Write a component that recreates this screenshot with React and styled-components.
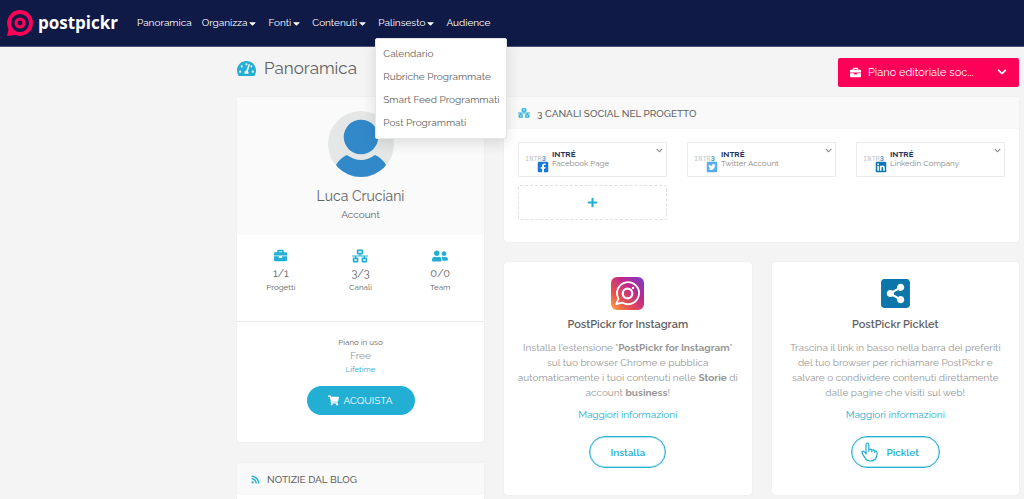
import React from "react";
import styled, { createGlobalStyle } from "styled-components";
import {
  FaTachometerAlt, FaBriefcase, FaNetworkWired, FaUserFriends, FaShoppingCart, FaRss,
  FaShareAltSquare, FaCaretDown, FaChevronDown, FaFacebookSquare, FaTwitterSquare, FaLinkedin, FaPlus,
} from "react-icons/fa";

const c = {
  navy: "#101a47", pink: "#ff0058", cyan: "#23aed4", text: "#636363", soft: "#979797",
  page: "#f4f4f4", head: "#f9f9f9", line: "#ebebeb",
};

const GlobalStyle = createGlobalStyle`
  * { box-sizing: border-box; }
  body { margin: 0; background: ${c.page}; color: ${c.text}; font: 10px/15px Raleway, Lato, sans-serif; }
  h1, h2, h3, p, ul { margin: 0; padding: 0; font-weight: 400; }
  ul { list-style: none; }
  a { color: inherit; text-decoration: none; }
  button, select { font: inherit; color: inherit; background: none; border: 0; padding: 0; cursor: pointer; }
  svg { display: block; flex: none; }
`;

const Header = styled.header`
  display: flex; align-items: center; height: 47px; padding-left: 6px;
  background: ${c.navy}; border-bottom: 1px solid #4c5479; color: #fff;
`;
const Brand = styled.a`
  display: flex; align-items: center; gap: 5px; width: 131px; color: #fff;
  font: 700 17px/24px "Open Sans", sans-serif;
`;
const Nav = styled.ul`display: flex; gap: 10px;`;
const NavItem = styled.li`position: relative;`;
const NavLink = styled.a`display: block; line-height: 16px;`;
const NavButton = styled.button`display: flex; align-items: center; line-height: 16px;`;
const Menu = styled.ul`
  position: absolute; z-index: 2; top: 23px; left: -3px; min-width: 129px; padding: 3px 7px 4px;
  background: #fff; color: ${c.text}; border: 1px solid #e6e6e6; border-radius: 2px;
  box-shadow: 0 4px 14px rgba(0, 0, 0, 0.12); white-space: nowrap; line-height: 23px;
`;

const Page = styled.main`padding: 0 5px 0 237px;`;
const TitleBar = styled.div`
  display: flex; justify-content: space-between; align-items: center; height: 50px;
`;
const Title = styled.h1`
  display: flex; align-items: center; gap: 8px; padding-bottom: 8px; font-size: 17px; line-height: 24px;
  svg { color: ${c.cyan}; }
`;
const Project = styled.label`
  display: flex; align-items: center; width: 181px; height: 29px; padding: 0 12px; gap: 7px;
  background: ${c.pink}; color: #fff; border-radius: 2px;
  select { flex: 1; appearance: none; outline: 0; font-size: 11px; }
  option { color: ${c.text}; }
`;
const Columns = styled.div`
  display: grid; grid-template-columns: 247fr 515fr; gap: 20px; align-items: start;
`;
const Stack = styled.div`display: grid; gap: ${(p) => p.$gap || 20}px;`;
const Card = styled.section`
  background: #fff; border-radius: 3px; box-shadow: 0 0 1px rgba(0, 0, 0, 0.16);
`;
const CardHead = styled.h2`
  display: flex; align-items: center; gap: 7px; height: 32px; padding: 0 14px; background: ${c.head};
  font-size: 10px; font-weight: 500;
  svg { color: ${c.cyan}; }
`;
const NewsList = styled.ul`min-height: 14px;`;

const Profile = styled.div`
  display: flex; flex-direction: column; align-items: center; padding: 14px 0 13px; background: #fafafa;
  svg { margin-bottom: 8px; }
  h2 { font-size: 14px; line-height: 22px; }
`;
const Stats = styled.ul`
  display: grid; grid-template-columns: repeat(3, 1fr); padding: 13px 4px 28px; text-align: center;
  border-bottom: 1px solid ${c.line};
`;
const Stat = styled.li`
  display: flex; flex-direction: column; align-items: center; font-size: 8px; line-height: 12px;
  svg { color: ${c.cyan}; }
  strong { font-size: 11px; font-weight: 400; line-height: 15px; }
`;
const StatIcon = styled.span`display: grid; place-items: center; height: 14px; margin-bottom: 4px;`;
const Plan = styled.div`
  display: flex; flex-direction: column; align-items: center; padding: 14px 0 27px;
  font-size: 8px; line-height: 13px;
  strong { font-size: 10px; font-weight: 400; color: ${c.soft}; }
  a { color: ${c.cyan}; line-height: 14px; }
`;
const BuyButton = styled.button`
  display: flex; align-items: center; justify-content: center; gap: 4px; width: 108px; height: 29px;
  margin-top: 10px; border-radius: 15px; background: ${c.cyan}; color: #fff; font-size: 10px;
`;

const Channels = styled.ul`
  display: grid; grid-template-columns: repeat(3, 1fr); gap: 8px 20px; padding: 13px 14px 22px;
`;
const Channel = styled.li`
  display: flex; align-items: flex-start; height: 35px; padding: 4px 3px 0 6px;
  border: 1px solid ${c.line}; border-radius: 1px; color: #858585; font-size: 8px; line-height: 9px;
  strong { display: block; margin-top: 3px; color: #26345c; }
  div { flex: 1; }
`;
const Avatar = styled.span`
  position: relative; width: 27px; height: 27px; padding-top: 8px; color: #c2c6c8;
  font: 7px/8px "Liberation Mono", monospace;
  b { color: #5199c5; }
  svg { position: absolute; right: 3px; bottom: 1px; background: #fff; border-radius: 2px; }
`;
const AddButton = styled.button`
  display: flex; align-items: center; justify-content: center; width: 100%; height: 35px;
  border: 1px dashed #e0e0e0; border-radius: 2px; color: ${c.cyan};
`;

const Promos = styled.div`display: grid; grid-template-columns: 1fr 1fr; gap: 20px;`;
const Promo = styled(Card)`
  display: flex; flex-direction: column; align-items: center; padding: 14px 10px 27px; text-align: center;
  h3 { margin-top: 6px; font-size: 11px; line-height: 18px; font-weight: 600; }
  p { margin-top: 6px; color: ${c.soft}; }
  > a { margin-top: 7px; color: ${c.cyan}; }
`;
const PromoIcon = styled.span`display: grid; place-items: center; height: 34px; color: #0c75aa;`;
const PillButton = styled.button`
  display: flex; align-items: center; justify-content: center; gap: 8px; height: 32px; margin-top: 14px;
  padding: 0 ${(p) => (p.$icon ? "20px 0 9px" : "20px")}; border: 1px solid ${c.cyan}; border-radius: 16px;
  box-shadow: inset 0 0 0 1px rgba(35, 174, 212, 0.35); color: ${c.cyan}; font-weight: 600;
`;

const BrandMark = () => (
  <svg width="27" height="27" viewBox="0 0 27 27" fill="none" stroke={c.pink}>
    <path d="M1 26 L3 17 L10 25 Z" fill={c.pink} stroke="none" />
    <circle cx="14" cy="13" r="11" strokeWidth="3.8" />
    <circle cx="14" cy="13" r="4" strokeWidth="3.2" />
  </svg>
);

const Portrait = () => (
  <svg width="66" height="66" viewBox="0 0 66 66">
    <defs><clipPath id="disc"><circle cx="33" cy="33" r="33" /></clipPath></defs>
    <g clipPath="url(#disc)">
      <rect width="66" height="66" fill="#e5e7e7" />
      <circle cx="33" cy="26" r="17.3" fill="#3289c9" />
      <path d="M8 54 Q12 47 19 44 Q33 54 47 44 Q54 47 58 54 L52 66 H14 Z" fill="#3289c9" />
    </g>
  </svg>
);

const InstaMark = () => (
  <svg width="33" height="33" viewBox="0 0 33 33" fill="none" stroke="#fff">
    <defs>
      <linearGradient id="insta" x1="0" y1="1" x2="1" y2="0">
        <stop offset="0" stopColor="#ffab43" /><stop offset="0.3" stopColor="#e6514d" />
        <stop offset="0.65" stopColor="#bd2890" /><stop offset="1" stopColor="#743fc9" />
      </linearGradient>
    </defs>
    <rect width="33" height="33" rx="6" fill="url(#insta)" stroke="none" />
    <path d="M7.5 21.6 A11 11 0 1 1 11.6 25.7 L5.2 27 Z" strokeWidth="1.8" strokeLinejoin="round" />
    <circle cx="16.5" cy="16.5" r="4.8" strokeWidth="2.2" />
    <circle cx="22" cy="11" r="1.2" fill="#fff" stroke="none" />
  </svg>
);

const Hand = () => (
  <svg width="18" height="20" viewBox="0 0 18 20" fill="none" stroke={c.cyan} strokeWidth="1.2" strokeLinejoin="round" strokeLinecap="round">
    <path d="M5 12 V2.6 Q5 1 6.4 1 Q7.8 1 7.8 2.6 V8 M7.8 9.5 V7.5 Q9.5 6.6 10.8 8 V9.8 M10.8 8.2 Q12.6 7.4 13.7 8.8 V10.4 M13.7 9 Q15.6 8.6 16 10.4 Q16.4 14.6 14.4 17 Q12.4 19 9.4 19 Q6 19 4.4 16.6 L1.2 11.4 Q0.6 9.6 2 9 Q3.2 8.8 5 12" />
  </svg>
);

const menuItems = ["Calendario", "Rubriche Programmate", "Smart Feed Programmati", "Post Programmati"];
const nav = [
  { label: "Panoramica" }, { label: "Organizza", drop: true }, { label: "Fonti", drop: true },
  { label: "Contenuti", drop: true }, { label: "Palinsesto", drop: true, items: menuItems }, { label: "Audience" },
];
const stats = [
  { icon: FaBriefcase, size: 13, value: "1/1", label: "Progetti" },
  { icon: FaNetworkWired, size: 16, value: "3/3", label: "Canali" },
  { icon: FaUserFriends, size: 16, value: "0/0", label: "Team" },
];
const channels = [
  { icon: FaFacebookSquare, color: "#1976d8", kind: "Facebook Page" },
  { icon: FaTwitterSquare, color: "#55acee", kind: "Twitter Account" },
  { icon: FaLinkedin, color: "#0d77b5", kind: "Linkedin Company" },
];

export default function App() {
  return (
    <>
      <GlobalStyle />
      <Header>
        <Brand href="#"><BrandMark />postpickr</Brand>
        <nav>
          <Nav>
            {nav.map((n) => (
              <NavItem key={n.label}>
                {n.drop ? <NavButton>{n.label}<FaCaretDown size={11} /></NavButton> : <NavLink href="#">{n.label}</NavLink>}
                {n.items && <Menu>{n.items.map((i) => <li key={i}><a href="#">{i}</a></li>)}</Menu>}
              </NavItem>
            ))}
          </Nav>
        </nav>
      </Header>
      <Page>
        <TitleBar>
          <Title><FaTachometerAlt size={19} />Panoramica</Title>
          <Project>
            <FaBriefcase size={11} />
            <select aria-label="Progetto"><option>Piano editoriale soc...</option></select>
            <FaChevronDown size={10} />
          </Project>
        </TitleBar>
        <Columns>
          <Stack $gap={21}>
            <Card>
              <Profile><Portrait /><h2>Luca Cruciani</h2><p>Account</p></Profile>
              <Stats>
                {stats.map(({ icon: Icon, size, value, label }) => (
                  <Stat key={label}><StatIcon><Icon size={size} /></StatIcon><strong>{value}</strong>{label}</Stat>
                ))}
              </Stats>
              <Plan>
                <span>Piano in uso</span><strong>Free</strong><a href="#">Lifetime</a>
                <BuyButton><FaShoppingCart size={11} />ACQUISTA</BuyButton>
              </Plan>
            </Card>
            <Card>
              <CardHead><FaRss size={9} />NOTIZIE DAL BLOG</CardHead>
              <NewsList />
            </Card>
          </Stack>
          <Stack>
            <Card>
              <CardHead><FaNetworkWired size={12} />3 CANALI SOCIAL NEL PROGETTO</CardHead>
              <Channels>
                {channels.map(({ icon: Icon, color, kind }) => (
                  <Channel key={kind}>
                    <Avatar>INTR<b>3</b><Icon size={12} color={color} /></Avatar>
                    <div><strong>INTRÉ</strong>{kind}</div>
                    <button aria-label={`Opzioni ${kind}`}><FaChevronDown size={7} /></button>
                  </Channel>
                ))}
                <li><AddButton aria-label="Aggiungi canale"><FaPlus size={11} /></AddButton></li>
              </Channels>
            </Card>
            <Promos>
              <Promo>
                <PromoIcon><InstaMark /></PromoIcon>
                <h3>PostPickr for Instagram</h3>
                <p>Installa l'estensione "<b>PostPickr for Instagram</b>"<br />sul tuo browser Chrome e pubblica<br />automaticamente i tuoi contenuti nelle <b>Storie</b> di<br />account <b>business</b>!</p>
                <a href="#">Maggiori informazioni</a>
                <PillButton>Installa</PillButton>
              </Promo>
              <Promo>
                <PromoIcon><FaShareAltSquare size={33} /></PromoIcon>
                <h3>PostPickr Picklet</h3>
                <p>Trascina il link in basso nella barra dei preferiti<br />del tuo browser per richiamare PostPickr e<br />salvare o condividere contenuti direttamente<br />dalle pagine che visiti sul web!</p>
                <a href="#">Maggiori informazioni</a>
                <PillButton $icon><Hand />Picklet</PillButton>
              </Promo>
            </Promos>
          </Stack>
        </Columns>
      </Page>
    </>
  );
}
